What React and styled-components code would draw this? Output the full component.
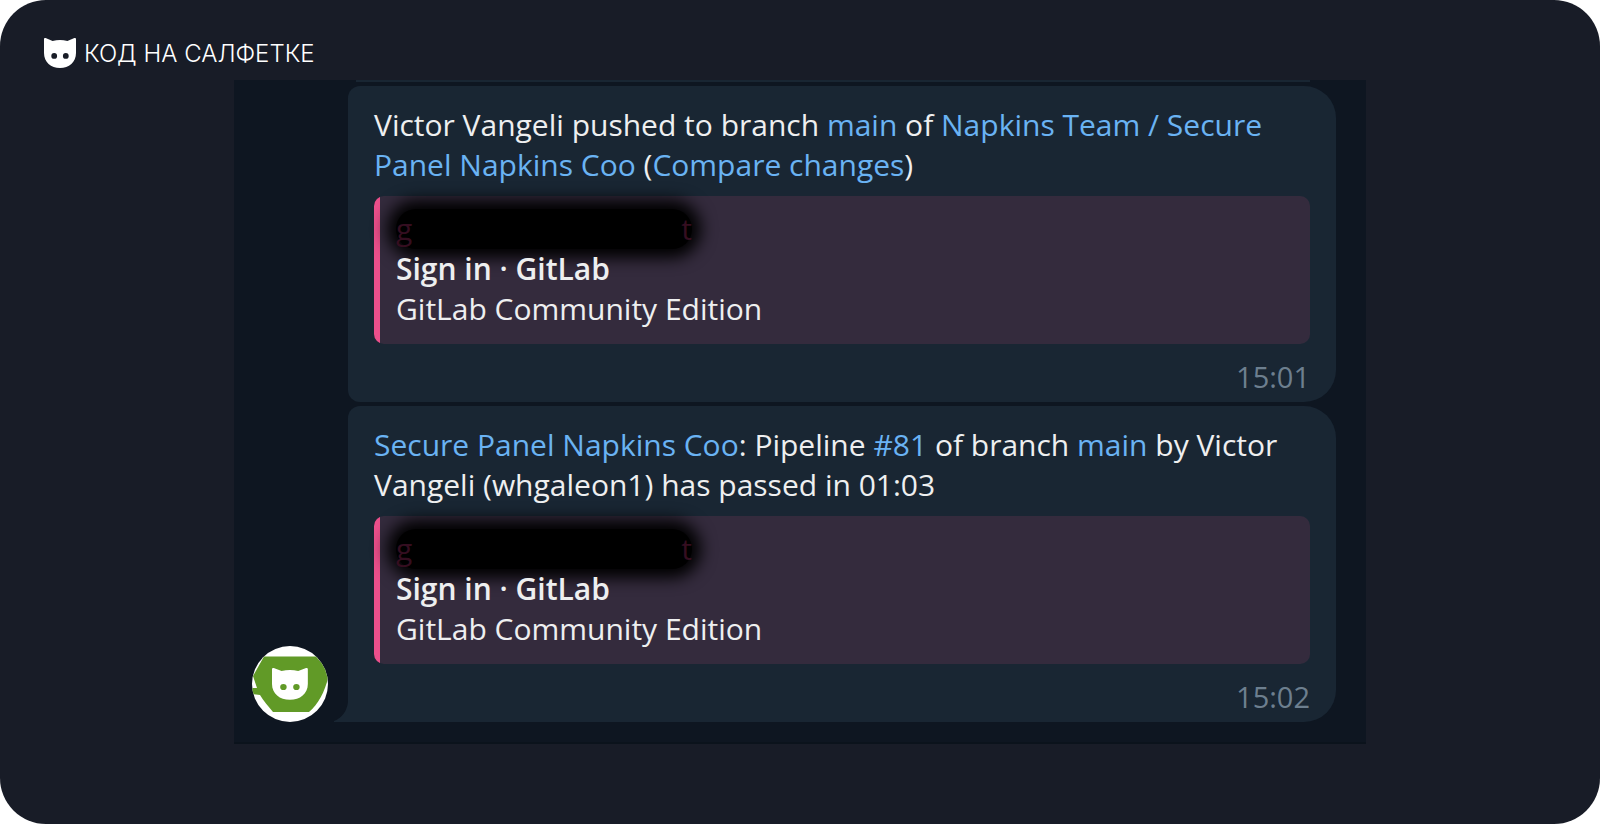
import React from "react";
import styled, { createGlobalStyle } from "styled-components";

const GlobalStyle = createGlobalStyle`
  *, *::before, *::after { box-sizing: border-box; }
  body { margin: 0; background: #ffffff; }
`;

const Page = styled.div`
  display: flex;
  flex-direction: column;
  min-height: 100vh;
  padding-bottom: 80px;
  border-radius: 46px;
  background: #181c27;
`;

const Brand = styled.header`
  display: flex;
  align-items: center;
  gap: 8px;
  height: 80px;
  padding: 26px 44px 0;
  color: #ffffff;
`;

const BrandMark = styled.svg`
  width: 32px;
  height: 30px;
  flex: none;
`;

const BrandName = styled.span`
  padding-top: 2px;
  font: 300 24px/30px Inter, "Liberation Sans", sans-serif;
`;

const Chat = styled.main`
  display: flex;
  flex-direction: column;
  gap: 4px;
  width: 100%;
  max-width: 1132px;
  margin: 0 auto;
  padding: 0 30px 20px 18px;
  background: #0e1621;
  border-bottom: 2px solid #0b131c;
  font: 400 30px/40px "Open Sans", "Noto Sans", sans-serif;
`;

const Row = styled.div`
  display: grid;
  grid-template-columns: 76px 1fr;
  column-gap: 20px;
  align-items: end;
`;

const Bubble = styled.article`
  position: relative;
  grid-column: 2;
  padding: 19px 26px 0;
  border-radius: 12px 32px 32px ${(p) => (p.$last ? "0" : "12px")};
  background: #192633;
  color: #eeeff0;
`;

const PreviousBubble = styled.div`
  grid-column: 2;
  height: 2px;
  margin: 0 26px 0 8px;
  background: #192633;
`;

const Tail = styled.svg`
  position: absolute;
  right: 100%;
  bottom: 0;
  width: 14px;
  height: 20px;
`;

const Message = styled.p`
  margin: 0 0 11px;
`;

const Link = styled.a`
  color: #6ab3f3;
  text-decoration: none;
`;

const Preview = styled.section`
  padding: 13px 22px 15px;
  border-radius: 10px;
  background: linear-gradient(to right, #eb4f8b 6px, #342b3d 6px);
`;

const Redacted = styled.div`
  display: flex;
  justify-content: space-between;
  width: 296px;
  height: 40px;
  border-radius: 20px;
  background: #000000;
  box-shadow: 0 0 16px 9px #000000;
  color: #350e20;
`;

const Line = styled.p`
  position: relative;
  margin: 0;
  font-weight: ${(p) => (p.$strong ? 600 : 400)};
`;

const Time = styled.time`
  display: block;
  padding: 13px 0 5px;
  color: #6d7f8f;
  font-size: 29px;
  text-align: right;
`;

const Avatar = styled.svg`
  display: block;
  width: 76px;
  height: 76px;
`;

const CAT =
  "M0 1.2C0 .2 .8-.2 1.6.1L8.6 2.9C11 2.3 13.5 2 16 2S21 2.3 23.4 2.9L30.4.1C31.2-.2 32 .2 32 1.2V15C32 24 25 30 16 30S0 24 0 15ZM10.2 15A2.9 2.9 0 1 0 10.2 20.8 2.9 2.9 0 1 0 10.2 15ZM21.8 15A2.9 2.9 0 1 0 21.8 20.8 2.9 2.9 0 1 0 21.8 15Z";

function LinkPreview() {
  return (
    <Preview>
      <Redacted>
        <span>g</span>
        <span>t</span>
      </Redacted>
      <Line $strong>Sign in · GitLab</Line>
      <Line>GitLab Community Edition</Line>
    </Preview>
  );
}

export default function App() {
  return (
    <>
      <GlobalStyle />
      <Page>
        <Brand>
          <BrandMark viewBox="0 0 32 30" aria-hidden="true">
            <path d={CAT} fill="#ffffff" fillRule="evenodd" />
          </BrandMark>
          <BrandName>КОД НА САЛФЕТКЕ</BrandName>
        </Brand>
        <Chat>
          <Row>
            <PreviousBubble />
          </Row>
          <Row>
            <Bubble>
              <Message>
                Victor Vangeli pushed to branch <Link href="#main">main</Link> of{" "}
                <Link href="#project">Napkins Team / Secure Panel Napkins Coo</Link> (
                <Link href="#compare">Compare changes</Link>)
              </Message>
              <LinkPreview />
              <Time>15:01</Time>
            </Bubble>
          </Row>
          <Row>
            <Avatar viewBox="0 0 76 76" aria-hidden="true">
              <clipPath id="disc">
                <circle cx="38" cy="38" r="38" />
              </clipPath>
              <g clipPath="url(#disc)">
                <rect width="76" height="76" fill="#ffffff" />
                <path d="M12 10.5H64L76 24V32C73 45 66 59 57 66H21C16 60 11 54 8 49L0 48V42H5L1 30Z" fill="#619a27" />
                <path transform="translate(20 22) scale(1.12 1.06)" d={CAT} fill="#ffffff" fillRule="evenodd" />
              </g>
            </Avatar>
            <Bubble $last>
              <Message>
                <Link href="#project">Secure Panel Napkins Coo</Link>: Pipeline{" "}
                <Link href="#pipeline">#81</Link> of branch <Link href="#main">main</Link> by Victor
                Vangeli (whgaleon1) has passed in 01:03
              </Message>
              <LinkPreview />
              <Time>15:02</Time>
              <Tail viewBox="0 0 14 20" aria-hidden="true">
                <path d="M14 0C13 9 8 16 0 19V20H14Z" fill="#192633" />
              </Tail>
            </Bubble>
          </Row>
        </Chat>
      </Page>
    </>
  );
}
